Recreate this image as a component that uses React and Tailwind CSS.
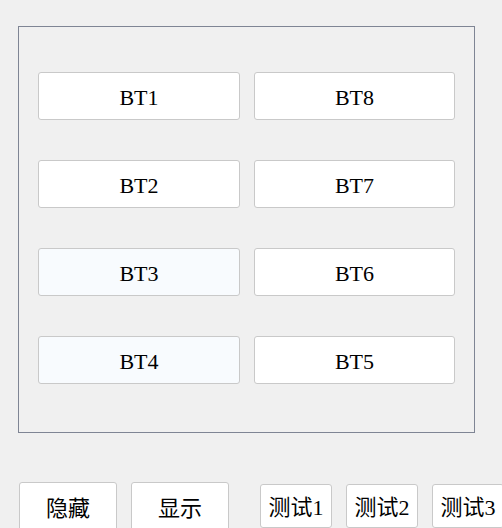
import React from 'react';

const font = { fontFamily: '"Liberation Serif", "Noto Sans CJK SC", serif' };

function Btn({ label, tint, className = '' }) {
  return (
    <button
      className={`flex items-center justify-center pt-[3px] rounded-[3px] border border-[#c9c9c9] text-[22px] leading-none text-black ${tint ? 'bg-[#f8fbfe]' : 'bg-white'} ${className}`}
      style={font}
    >
      {label}
    </button>
  );
}

export default function App() {
  const grid = [
    ['BT1', false], ['BT8', false],
    ['BT2', false], ['BT7', false],
    ['BT3', true], ['BT6', false],
    ['BT4', true], ['BT5', false],
  ];

  return (
    <div className="w-[502px] h-[528px] overflow-hidden bg-[#f0f0f0] pt-[26px] pl-[18px]">
      {/* group frame */}
      <div className="w-[457px] h-[407px] border border-[#7f8594] pt-[45px] pl-[19px]">
        <div className="grid grid-cols-[202px_201px] gap-x-[14px] gap-y-[40px]">
          {grid.map(([label, tint]) => (
            <Btn key={label} label={label} tint={tint} className="h-[48px]" />
          ))}
        </div>
      </div>

      {/* bottom buttons */}
      <div className="mt-[49px] ml-[1px] flex items-start w-[600px]">
        <Btn label="隐藏" className="w-[98px] h-[50px] shrink-0" />
        <Btn label="显示" className="w-[98px] h-[50px] shrink-0 ml-[14px]" />
        <Btn label="测试1" className="w-[72px] h-[44px] shrink-0 ml-[31px] mt-[2px]" />
        <Btn label="测试2" className="w-[72px] h-[44px] shrink-0 ml-[14px] mt-[2px]" />
        <Btn label="测试3" className="w-[72px] h-[44px] shrink-0 ml-[14px] mt-[2px]" />
      </div>
    </div>
  );
}
